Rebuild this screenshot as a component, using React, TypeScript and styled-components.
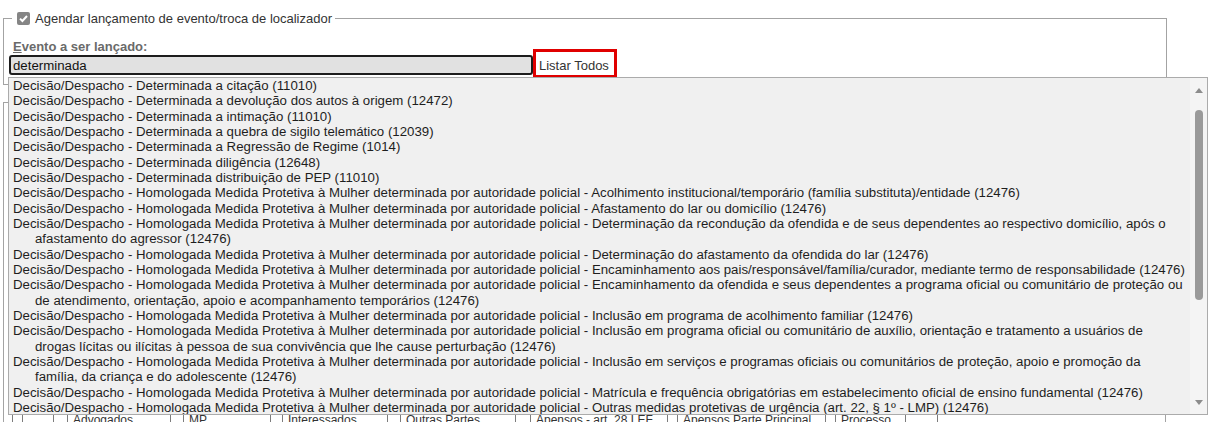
import React from "react";
import styled, { createGlobalStyle } from "styled-components";

const GlobalStyle = createGlobalStyle`
  html, body {
    margin: 0;
    padding: 0;
    background: #ffffff;
  }
  body {
    font-family: "Liberation Sans", Arial, sans-serif;
    font-size: 13px;
    color: #222222;
    overflow: hidden;
  }
`;

const Page = styled.div`
  position: relative;
  width: 1211px;
  height: 422px;
  overflow: hidden;
  box-sizing: border-box;
  padding: 11px 0 0 3px;
`;

const Fieldset = styled.fieldset<{ $width: number }>`
  margin: 0;
  min-width: 0;
  width: ${(p) => p.$width}px;
  box-sizing: border-box;
  border: 1px solid #a3a3a3;
  padding: 0 6px 9px 5px;
`;

const Legend = styled.legend`
  margin-left: 3px;
  padding: 0 3px 0 5px;
  height: 15px;
  display: flex;
  align-items: center;
  font-size: 13px;
  line-height: 15px;
  color: #333333;
`;

const CheckBox = styled.span`
  width: 13px;
  height: 13px;
  border-radius: 2px;
  background: #858585;
  display: inline-flex;
  align-items: center;
  justify-content: center;
  margin-right: 5px;
  flex: none;
`;

const FieldLabel = styled.label`
  display: block;
  margin: 13px 0 0 4px;
  font-size: 13px;
  line-height: 15px;
  font-weight: bold;
  color: #6a6a6a;

  u {
    text-decoration: underline;
  }
`;

const InputRow = styled.div`
  display: flex;
  align-items: flex-end;
  margin-top: -2px;
`;

const SearchInput = styled.input`
  width: 524px;
  height: 20px;
  box-sizing: border-box;
  border: 2px solid #1c1c1c;
  border-radius: 3px;
  background: #e1e1e1;
  padding: 0 2px;
  margin: 0;
  font-family: "Liberation Sans", Arial, sans-serif;
  font-size: 13.25px;
  color: #111111;
  outline: none;
`;

const ListButton = styled.button`
  width: 78px;
  height: 23px;
  box-sizing: border-box;
  margin: 0 0 0 3px;
  padding: 3px 0 0 3px;
  border: none;
  background: #ffffff;
  outline: 3px solid #e00000;
  outline-offset: 0;
  font-family: "Liberation Sans", Arial, sans-serif;
  font-size: 13px;
  line-height: 15px;
  color: #333333;
  text-align: left;
  white-space: nowrap;
`;

const LowerFieldset = styled(Fieldset)`
  margin-top: 17px;
  padding: 309px 6px 9px 8px;
  height: 360px;
`;

const PartyRow = styled.div`
  display: flex;
  height: 20px;
`;

const PartyCell = styled.div<{ $w: number }>`
  width: ${(p) => p.$w}px;
  flex: none;
  box-sizing: border-box;
  border-left: 1px solid #7c7c7c;
  padding: 1px 0 0 5px;
  font-size: 12px;
  line-height: 15px;
  color: #333333;
  white-space: nowrap;
  overflow: hidden;
`;

const Dropdown = styled.div`
  position: absolute;
  left: 8px;
  top: 77px;
  width: 1200px;
  height: 338px;
  box-sizing: border-box;
  border: 1px solid #ababab;
  background: #f0f0f0;
  display: flex;
`;

const OptionList = styled.ul`
  flex: 1;
  list-style: none;
  margin: 0;
  padding: 0 2px 0 4px;
  overflow: hidden;
  font-size: 13.25px;
  line-height: 15.33px;
`;

const OptionItem = styled.li`
  padding-left: 22px;
  text-indent: -22px;
  color: #1e1e1e;
  white-space: pre-line;
`;

const ScrollBar = styled.div`
  width: 17px;
  flex: none;
  background: #f4f4f4;
  display: flex;
  flex-direction: column;
  align-items: center;
  padding: 10px 0 9px;
  box-sizing: border-box;
`;

const Arrow = styled.span<{ $down?: boolean }>`
  width: 0;
  height: 0;
  border-left: 4px solid transparent;
  border-right: 4px solid transparent;
  ${(p) =>
    p.$down ? "border-top: 5px solid #8c8c8c;" : "border-bottom: 5px solid #8c8c8c;"}
  margin-top: ${(p) => (p.$down ? "auto" : "0")};
`;

const Thumb = styled.span`
  width: 8px;
  height: 190px;
  border-radius: 4px;
  background: #9a9a9a;
  margin-top: 17px;
`;

const P = "Decisão/Despacho - Homologada Medida Protetiva à Mulher determinada por autoridade policial - ";

const options: string[] = [
  "Decisão/Despacho - Determinada a citação (11010)",
  "Decisão/Despacho - Determinada a devolução dos autos à origem (12472)",
  "Decisão/Despacho - Determinada a intimação (11010)",
  "Decisão/Despacho - Determinada a quebra de sigilo telemático (12039)",
  "Decisão/Despacho - Determinada a Regressão de Regime (1014)",
  "Decisão/Despacho - Determinada diligência (12648)",
  "Decisão/Despacho - Determinada distribuição de PEP (11010)",
  P + "Acolhimento institucional/temporário (família substituta)/entidade (12476)",
  P + "Afastamento do lar ou domicílio (12476)",
  P + "Determinação da recondução da ofendida e de seus dependentes ao respectivo domicílio, após o afastamento do agressor (12476)",
  P + "Determinação do afastamento da ofendida do lar (12476)",
  P + "Encaminhamento aos pais/responsável/família/curador, mediante termo de responsabilidade (12476)",
  P + "Encaminhamento da ofendida e seus dependentes a programa oficial ou comunitário de proteção ou de atendimento, orientação, apoio e acompanhamento temporários (12476)",
  P + "Inclusão em programa de acolhimento familiar (12476)",
  P + "Inclusão em programa oficial ou comunitário de auxílio, orientação e tratamento a usuários de\ndrogas lícitas ou ilícitas à pessoa de sua convivência que lhe cause perturbação (12476)",
  P + "Inclusão em serviços e programas oficiais ou comunitários de proteção, apoio e promoção da\nfamília, da criança e do adolescente (12476)",
  P + "Matrícula e frequência obrigatórias em estabelecimento oficial de ensino fundamental (12476)",
  P + "Outras medidas protetivas de urgência (art. 22, § 1º - LMP) (12476)",
];

const parties: { w: number; label: string }[] = [
  { w: 10, label: "" },
  { w: 31, label: "" },
  { w: 14, label: "" },
  { w: 103, label: "Advogados" },
  { w: 13, label: "" },
  { w: 87, label: "MP" },
  { w: 12, label: "" },
  { w: 105, label: "Interessados" },
  { w: 13, label: "" },
  { w: 115, label: "Outras Partes" },
  { w: 15, label: "" },
  { w: 137, label: "Apensos - art. 28 LEF" },
  { w: 10, label: "" },
  { w: 148, label: "Apensos Parte Principal" },
  { w: 10, label: "" },
  { w: 70, label: "Processo" },
  { w: 32, label: "" },
  { w: 10, label: "" },
];

export default function App() {
  return (
    <>
      <GlobalStyle />
      <Page>
        <Fieldset $width={1164}>
          <Legend>
            <CheckBox>
              <svg width="11" height="11" viewBox="0 0 11 11">
                <path d="M2 5.6 L4.4 8 L9 3" fill="none" stroke="#ffffff" strokeWidth="2" />
              </svg>
            </CheckBox>
            Agendar lançamento de evento/troca de localizador
          </Legend>
          <FieldLabel htmlFor="evento">
            <u>E</u>vento a ser lançado:
          </FieldLabel>
          <InputRow>
            <SearchInput id="evento" defaultValue="determinada" />
            <ListButton type="button">Listar Todos</ListButton>
          </InputRow>
        </Fieldset>
        <LowerFieldset $width={1163}>
          <PartyRow>
            {parties.map((c, i) => (
              <PartyCell key={i} $w={c.w}>
                {c.label}
              </PartyCell>
            ))}
          </PartyRow>
        </LowerFieldset>
        <Dropdown>
          <OptionList>
            {options.map((o) => (
              <OptionItem key={o}>{o}</OptionItem>
            ))}
          </OptionList>
          <ScrollBar>
            <Arrow />
            <Thumb />
            <Arrow $down />
          </ScrollBar>
        </Dropdown>
      </Page>
    </>
  );
}
